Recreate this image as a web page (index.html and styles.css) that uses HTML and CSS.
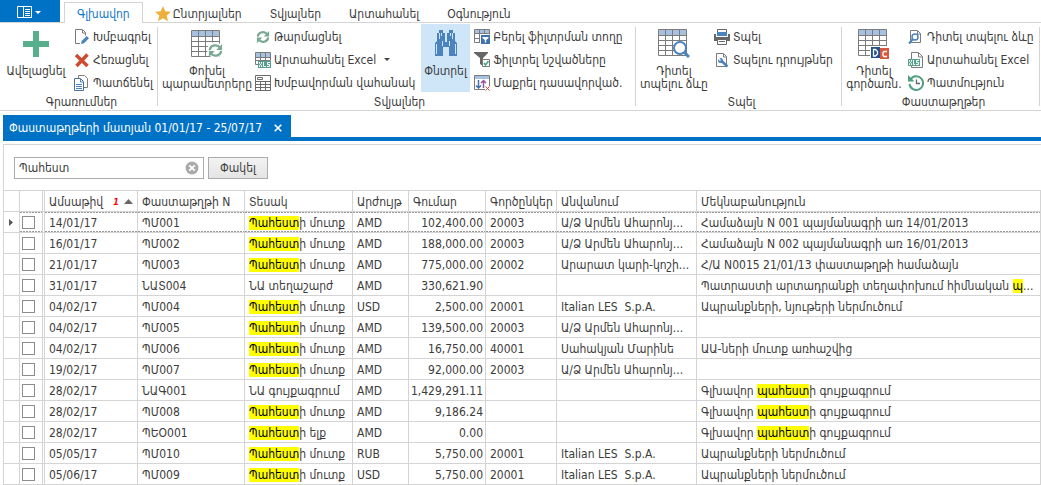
FILE: index.html
```html
<!DOCTYPE html>
<html lang="hy">
<head>
<meta charset="utf-8">
<title>Փաստաթղթերի մատյան</title>
<link rel="stylesheet" href="styles.css">
</head>
<body>
<svg class="sprite" aria-hidden="true">
  <symbol id="grid" viewBox="0 0 32 30">
    <path fill="#fff" d="M1 1h28v26H1z"/><path fill="#a9c1e0" d="M1 1h28v5H1z"/>
    <path fill="none" stroke="#7b7b7b" d="M.5.500h28v26H.5zM.5 6.500h28M.5 11.500h28M.5 16.500h28M.5 21.500h28M7.500 1v25M14.500 1v25M21.500 1v25"/>
  </symbol>
  <symbol id="sync" viewBox="0 0 16 16">
    <path fill="none" stroke="#79a893" stroke-width="2.400" d="M2 7.500C2.500 2 10 .8 12.800 5M14 8.500C13.500 14 6 15.200 3.200 11"/>
    <path fill="#79a893" d="M15 1v6.500H8.800zM1 15V8.500h6.200z"/>
  </symbol>
</svg>

<header class="tabs">
  <button class="app-button" aria-label="Մենյու">
    <svg width="26" height="13" viewBox="0 0 26 13"><path fill="none" stroke="#fff" d="M.5.500h14v11H.5zM6.500 1v10"/><path stroke="#fff" d="M8 3.500h5M8 5.500h5M8 7.500h5M8 9.500h5"/><path fill="#fff" d="M18 5h6l-3 3z"/></svg>
  </button>
  <nav class="tab-list">
    <button class="tab active">Գլխավոր</button>
    <button class="tab starred"><svg width="16" height="16" viewBox="0 0 16 16"><path fill="#eeb03c" d="M8 0l2.300 5.200 5.700.6-4.300 3.700L13 15.300 8 12.300l-5 3 1.300-5.800L0 5.800l5.700-.6z"/></svg>Ընտրյալներ</button>
    <button class="tab">Տվյալներ</button>
    <button class="tab">Արտահանել</button>
    <button class="tab">Օգնություն</button>
  </nav>
</header>

<section class="ribbon">
  <div class="group g-records">
    <div class="tools">
      <button class="big"><svg width="32" height="32" viewBox="0 0 32 32"><path fill="#57b08b" d="M13 3h6v10h10v6H19v10h-6V19H3v-6h10z"/></svg><span>Ավելացնել</span></button>
      <div class="stack">
        <button class="small"><svg width="16" height="16" viewBox="0 0 16 16"><path fill="#fff" stroke="#7b7b7b" d="M1.500 14.500V.500h7l3 3v11z"/><path fill="none" stroke="#7b7b7b" d="M8.500 1v3h3"/><path fill="#fff" d="M6 16V12l7-7 3 3v5l-3 3z"/><path fill="#4a83bd" d="M7 15l.7-3 5-5L15 9.300l-5 5z"/></svg>Խմբագրել</button>
        <button class="small"><svg width="16" height="16" viewBox="0 0 16 16"><path stroke="#cf4a31" stroke-width="3.400" d="M2 3l11.500 11M13.500 2.500L2.500 14"/></svg>Հեռացնել</button>
        <button class="small"><svg width="16" height="16" viewBox="0 0 16 16"><path fill="#fff" stroke="#7b7b7b" d="M4.500 12.500V.500h6l3 3v9z"/><path fill="#fff" stroke="#4a6f9c" d="M.5 15.500v-12h6l3 3v9z"/><path fill="none" stroke="#4a83bd" d="M6.500 4v3h3M2 9.500h6M2 11.500h6M2 13.500h6"/></svg>Պատճենել</button>
      </div>
    </div>
    <h2>Գրառումներ</h2>
  </div>

  <div class="group g-data">
    <div class="tools">
      <button class="big"><svg width="32" height="32" viewBox="0 0 32 32"><use href="#grid" y="2" width="32" height="30"/><circle cx="24" cy="22" r="8" fill="#fff"/><use href="#sync" x="17" y="15" width="15" height="15"/></svg><span>Փոխել<br>պարամետրերը</span></button>
      <div class="stack">
        <button class="small"><svg width="16" height="16"><use href="#sync" width="16" height="14" y="1"/></svg>Թարմացնել</button>
        <button class="small"><svg width="16" height="16" viewBox="0 0 16 16"><path fill="#a9c1e0" d="M1 1h14v4H1z"/><path fill="none" stroke="#7b7b7b" d="M3 12.500H.5V.500h15v8M.5 5.500h15M.5 8.500h15M5.500 0v8M10.500 0v8"/><path fill="#57a08b" d="M3 9h13v7H3z"/><path fill="none" stroke="#fff" d="M4.500 10v1.500l2 2V15M6.500 10v1.500l-2 2V15M8.500 10v4.500H11M15 10.500h-2.500v2h2v2H12"/></svg>Արտահանել Excel<svg class="caret" width="6" height="4" viewBox="0 0 6 4"><path fill="#444" d="M0 0h6L3 3z"/></svg></button>
        <button class="small"><svg width="16" height="16" viewBox="0 0 16 16"><path fill="#fff" stroke="#6b6b6b" d="M.5.500h15v15H.5z"/><path fill="none" stroke="#6b6b6b" d="M2.500 2.500h5v2h-5zM.5 6.500h15M.5 9.500h15M.5 12.500h15M5.500 6v10M10.500 6v10"/></svg>Խմբավորման վահանակ</button>
      </div>
      <button class="big pressed"><svg width="32" height="32" viewBox="0 0 32 32"><path fill="#4a83bd" d="M9 2h4v3h2v8h2V5h2V2h4v3h2v8l2 2v13h-8v-9h-6v9H5V15l2-2V5h2z"/><path fill="none" stroke="#cfe6f9" d="M9.500 5v6M22.500 5v6M6.500 16v10M25.500 16v10M12.500 13v5M19.500 13v5M15 13.500h2M11.500 5v3M20.500 5v3"/></svg><span>Փնտրել</span></button>
      <div class="stack">
        <button class="small"><svg width="16" height="16" viewBox="0 0 16 16"><path fill="#a9c1e0" d="M1 1h14v4H1z"/><path fill="none" stroke="#7b7b7b" d="M6 13.500H.5V.500h15v5M.5 4.500h15M.5 9.500H6M5.500 0v13M10.500 0v5"/><path fill="#3f73b0" d="M7 6h9v9H7z"/><path fill="#fff" d="M8.500 8h6v1L12.200 11v2.500h-1.400V11L8.500 9z"/></svg>Բերել ֆիլտրման տողը</button>
        <button class="small"><svg width="16" height="16" viewBox="0 0 16 16"><path fill="#666" d="M0 0h14v1L9 6v8l-3-2V6L0 1z"/><path fill="#fff" stroke="#777" d="M8.500 7.500h7v7h-7z"/><path fill="none" stroke="#3fa57c" stroke-width="1.500" d="M10 11l1.500 2 3-4"/></svg>Ֆիլտրել նշվածները</button>
        <button class="small"><svg width="16" height="16" viewBox="0 0 16 16"><path fill="#fff" stroke="#7b7b7b" d="M.5.500h15v14H.5z"/><path fill="#a9c1e0" d="M1 1h14v3H1z"/><path fill="none" stroke="#3f73b0" stroke-width="1.500" d="M4.500 5v8M2 10.500l2.500 2.500L7 10.500"/><path fill="none" stroke="#9653a3" stroke-width="1.500" d="M9.500 13V6M7 8l2.500-2.500L12 8"/><path fill="#fff" d="M11 11h5v5h-5z"/><path stroke="#cf4a31" d="M11.500 11.500l4 4M15.500 11.500l-4 4"/></svg>Մաքրել դասավորված.</button>
      </div>
    </div>
    <h2>Տվյալներ</h2>
  </div>

  <div class="group g-print">
    <div class="tools">
      <button class="big"><svg width="32" height="32" viewBox="0 0 32 32"><use href="#grid" y="1" width="32" height="30"/><circle cx="22" cy="20" r="6" fill="#fff" stroke="#4a83bd" stroke-width="2"/><path stroke="#4a83bd" stroke-width="3" d="M26 24l5 5"/></svg><span>Դիտել<br>տպելու ձևը</span></button>
      <div class="stack">
        <button class="small"><svg width="16" height="16" viewBox="0 0 16 16"><path fill="#fff" stroke="#666" d="M3.500.500h9v4h-9z"/><path fill="#4a83bd" d="M3 3h10v4H3z"/><path fill="#666" d="M0 5h2v3h12V5h2v7H0z"/><path fill="#fff" stroke="#666" d="M3.500 10.500h9v5h-9z"/><path stroke="#666" d="M5 12.500h6"/></svg>Տպել</button>
        <button class="small"><svg width="16" height="16" viewBox="0 0 16 16"><path fill="#fff" stroke="#7b7b7b" d="M2.500 14.500V1.500h7l3 3v10z"/><path fill="none" stroke="#7b7b7b" d="M9.500 2v3h3"/><path stroke="#4a83bd" stroke-width="2.500" d="M6.500 8l7 6.500"/><circle cx="6.500" cy="8.500" r="2.500" fill="#4a83bd"/><path stroke="#fff" stroke-width="1.500" d="M4 6l2.500 2.500"/></svg>Տպելու դրույթներ</button>
      </div>
    </div>
    <h2>Տպել</h2>
  </div>

  <div class="group g-docs">
    <div class="tools">
      <button class="big"><svg width="32" height="32" viewBox="0 0 32 32"><use href="#grid" y="1" width="32" height="30"/><path fill="#fff" d="M12 18h20v14H12z"/><path fill="#25508f" d="M13 19h9v11h-9z"/><path fill="#d9593d" d="M22 20h9v11h-9z"/><path fill="none" stroke="#fff" stroke-width="1.300" d="M15.500 21.500h2l2 2v2.500l-2 2h-2zM29 23.500h-3l-1 1v3l1 1h3"/></svg><span>Դիտել<br>գործառն.</span></button>
      <div class="stack">
        <button class="small"><svg width="16" height="16" viewBox="0 0 16 16"><path fill="#fff" stroke="#7b7b7b" d="M2.500 13.500V1.500h7l3 3v9z"/><path fill="none" stroke="#7b7b7b" d="M9.500 2v3h3"/><circle cx="7" cy="8" r="3" fill="#fff" stroke="#4a83bd" stroke-width="1.500"/><path stroke="#4a83bd" stroke-width="2" d="M5 10l-4 4.500"/></svg>Դիտել տպելու ձևը</button>
        <button class="small"><svg width="16" height="16" viewBox="0 0 16 16"><path fill="#fff" stroke="#7b7b7b" d="M3.500 15.500V.500h7l4 4v11z"/><path fill="none" stroke="#7b7b7b" d="M10.500 1v4h4"/><path fill="#57a08b" d="M0 7h12v7H0z"/><path fill="none" stroke="#fff" d="M1.500 8v1.500l2 2V13M3.500 8v1.500l-2 2V13M5.500 8v4.500H7M11 8.500H8.500v2h2v2H8"/></svg>Արտահանել Excel</button>
        <button class="small"><svg width="16" height="16" viewBox="0 0 16 16"><path fill="none" stroke="#4f9f80" stroke-width="2" d="M2.500 4.500A6.800 6.800 0 1 1 1.500 9"/><path fill="#4f9f80" d="M0 0v6.500h6.500z"/><path fill="none" stroke="#666" stroke-width="1.300" d="M8.500 4.500v4H12"/></svg>Պատմություն</button>
      </div>
    </div>
    <h2>Փաստաթղթեր</h2>
  </div>
</section>

<main class="workspace">
  <div class="doc-tabs">
    <div class="doc-tab">Փաստաթղթերի մատյան 01/01/17 - 25/07/17
      <button class="close" aria-label="Փակել ներդիրը"><svg width="8" height="8" viewBox="0 0 8 8"><path stroke="#fff" stroke-width="1.600" d="M.7.700l6.600 6.600M7.300.700L.7 7.300"/></svg></button>
    </div>
  </div>
  <div class="document">
    <form class="search">
      <div class="search-box">
        <input type="text" aria-label="Փնտրել" value="Պահեստ">
        <button type="button" class="clear" aria-label="Մաքրել"><svg width="14" height="14" viewBox="0 0 14 14"><circle cx="7" cy="7" r="6.500" fill="#ababab"/><path stroke="#fff" stroke-width="1.800" d="M4.300 4.300l5.400 5.400M9.700 4.300L4.300 9.700"/></svg></button>
      </div>
      <button type="button" class="dismiss">Փակել</button>
    </form>
    <table class="journal">
      <colgroup><col class="c-mark"><col class="c-check"><col class="c-date"><col class="c-number"><col class="c-type"><col class="c-currency"><col class="c-amount"><col class="c-partner"><col class="c-name"><col></colgroup>
      <thead><tr><th></th><th></th><th><div class="sorted"><span>Ամսաթիվ</span><em>1</em><svg width="9" height="5" viewBox="0 0 9 5"><path fill="#666" d="M4.500 0L9 5H0z"/></svg></div></th><th>Փաստաթղթի N</th><th>Տեսակ</th><th>Արժույթ</th><th>Գումար</th><th>Գործընկեր</th><th>Անվանում</th><th>Մեկնաբանություն</th></tr></thead>
      <tbody>
        <tr class="focused"><td><svg width="4" height="7" viewBox="0 0 4 7"><path fill="#555" d="M0 0l4 3.500L0 7z"/></svg></td><td><input type="checkbox" aria-label="ՊՄ001"></td><td>14/01/17</td><td>ՊՄ001</td><td><mark>Պահեստ</mark>ի մուտք</td><td>AMD</td><td>102,400.00</td><td>20003</td><td>Ա/Ձ Արմեն Ահարոնյ...</td><td>Համաձայն N 001 պայմանագրի առ 14/01/2013</td></tr>
        <tr><td></td><td><input type="checkbox" aria-label="ՊՄ002"></td><td>16/01/17</td><td>ՊՄ002</td><td><mark>Պահեստ</mark>ի մուտք</td><td>AMD</td><td>188,000.00</td><td>20003</td><td>Ա/Ձ Արմեն Ահարոնյ...</td><td>Համաձայն N 002 պայմանագրի առ 16/01/2013</td></tr>
        <tr><td></td><td><input type="checkbox" aria-label="ՊՄ003"></td><td>21/01/17</td><td>ՊՄ003</td><td><mark>Պահեստ</mark>ի մուտք</td><td>AMD</td><td>775,000.00</td><td>20002</td><td>Արարատ կարի-կոշի...</td><td>Հ/Ա N0015 21/01/13 փաստաթղթի համաձայն</td></tr>
        <tr><td></td><td><input type="checkbox" aria-label="ՆԱՏ004"></td><td>31/01/17</td><td>ՆԱՏ004</td><td>ՆԱ տեղաշարժ</td><td>AMD</td><td>330,621.90</td><td></td><td></td><td>Պատրաստի արտադրանքի տեղափոխում հիմնական <mark>պ</mark>...</td></tr>
        <tr><td></td><td><input type="checkbox" aria-label="ՊՄ004"></td><td>04/02/17</td><td>ՊՄ004</td><td><mark>Պահեստ</mark>ի մուտք</td><td>USD</td><td>2,500.00</td><td>20001</td><td>Italian LES&nbsp; S.p.A.</td><td>Ապրանքների, նյութերի ներմուծում</td></tr>
        <tr><td></td><td><input type="checkbox" aria-label="ՊՄ005"></td><td>04/02/17</td><td>ՊՄ005</td><td><mark>Պահեստ</mark>ի մուտք</td><td>AMD</td><td>139,500.00</td><td>20003</td><td>Ա/Ձ Արմեն Ահարոնյ...</td><td></td></tr>
        <tr><td></td><td><input type="checkbox" aria-label="ՊՄ006"></td><td>04/02/17</td><td>ՊՄ006</td><td><mark>Պահեստ</mark>ի մուտք</td><td>AMD</td><td>16,750.00</td><td>40001</td><td>Սահակյան Մարինե</td><td>ԱԱ-ների մուտք առհաշվից</td></tr>
        <tr><td></td><td><input type="checkbox" aria-label="ՊՄ007"></td><td>19/02/17</td><td>ՊՄ007</td><td><mark>Պահեստ</mark>ի մուտք</td><td>AMD</td><td>92,000.00</td><td>20003</td><td>Ա/Ձ Արմեն Ահարոնյ...</td><td></td></tr>
        <tr><td></td><td><input type="checkbox" aria-label="ՆԱԳ001"></td><td>28/02/17</td><td>ՆԱԳ001</td><td>ՆԱ գույքագրում</td><td>AMD</td><td>1,429,291.11</td><td></td><td></td><td>Գլխավոր <mark>պահեստ</mark>ի գույքագրում</td></tr>
        <tr><td></td><td><input type="checkbox" aria-label="ՊՄ008"></td><td>28/02/17</td><td>ՊՄ008</td><td><mark>Պահեստ</mark>ի մուտք</td><td>AMD</td><td>9,186.24</td><td></td><td></td><td>Գլխավոր <mark>պահեստ</mark>ի գույքագրում</td></tr>
        <tr><td></td><td><input type="checkbox" aria-label="ՊԵՕ001"></td><td>28/02/17</td><td>ՊԵՕ001</td><td><mark>Պահեստ</mark>ի ելք</td><td>AMD</td><td>0.00</td><td></td><td></td><td>Գլխավոր <mark>պահեստ</mark>ի գույքագրում</td></tr>
        <tr><td></td><td><input type="checkbox" aria-label="ՊՄ010"></td><td>05/05/17</td><td>ՊՄ010</td><td><mark>Պահեստ</mark>ի մուտք</td><td>RUB</td><td>5,750.00</td><td>20001</td><td>Italian LES&nbsp; S.p.A.</td><td>Ապրանքների ներմուծում</td></tr>
        <tr><td></td><td><input type="checkbox" aria-label="ՊՄ009"></td><td>05/06/17</td><td>ՊՄ009</td><td><mark>Պահեստ</mark>ի մուտք</td><td>USD</td><td>5,750.00</td><td>20001</td><td>Italian LES&nbsp; S.p.A.</td><td>Ապրանքների ներմուծում</td></tr>
      </tbody>
    </table>
  </div>
</main>
</body>
</html>
```
FILE: styles.css
```css
:root {
  --blue: #0072c6;
  --line: #d4d4d4;
  --text: #3c3c3c;
}

* { box-sizing: border-box; }

body {
  margin: 0;
  background: #fff;
  color: var(--text);
  font: 12px/14px "DejaVu Sans Condensed", "DejaVu Sans", sans-serif;
}

button, input { margin: 0; font: inherit; color: inherit; }
button { padding: 0; border: 0; background: none; white-space: nowrap; }
svg { display: block; flex: none; }
.sprite { position: absolute; width: 0; height: 0; }

/* Ribbon tabs */
.tabs { display: flex; height: 23px; border-bottom: 1px solid var(--line); }
.app-button { display: flex; align-items: center; justify-content: center; width: 60px; height: 22px; padding-top: 3px; background: var(--blue); }
.tab-list { display: flex; height: 23px; padding: 2px 0 0 4px; }
.tab { display: flex; align-items: center; justify-content: center; padding: 2px 14px 0; }
.tab.active { border: 1px solid var(--line); border-bottom: 0; background: #fff; color: #1177c9; padding: 1px 12px 0; }
.tab.starred { padding-left: 12px; }
.tab.starred svg { margin-right: 2px; }

/* Ribbon */
.ribbon { display: flex; height: 88px; border-bottom: 1px solid var(--line); }
.group { position: relative; display: flex; flex-direction: column; flex: none; padding: 1px 0 0 5px; }
.group::after { content: ""; position: absolute; right: 0; top: 4px; bottom: 4px; border-right: 1px solid var(--line); }
.group h2 { margin: 0; font: inherit; line-height: 16px; text-align: center; }
.g-records { width: 158px; }
.g-data { width: 478px; }
.g-print { width: 206px; }
.g-docs { width: 198px; }
.tools { display: flex; height: 71px; gap: 4px; }
.big { display: flex; flex-direction: column; align-items: center; height: 68px; padding-top: 4px; line-height: 13px; }
.big span { padding-top: 5px; }
.g-records .big { width: 62px; }
.g-data .big { width: 88px; }
.g-data .big.pressed { width: 50px; background: #cfe6f9; }
.g-print .big { width: 66px; }
.g-docs .big { width: 54px; }
.stack { display: flex; flex-direction: column; align-items: flex-start; padding: 1px 0 0 3px; }
.g-data .stack { width: 163px; padding-left: 0; }
.small { display: flex; align-items: center; gap: 3px; height: 23px; }
.caret { margin-left: 5px; }

/* Document area */
.workspace { padding: 4px 0 0 3px; }
.doc-tabs { display: flex; border-bottom: 4px solid var(--blue); }
.doc-tab { display: flex; align-items: center; gap: 12px; height: 22px; padding: 4px 9px 0 6px; background: var(--blue); color: #fff; }
.close { padding: 2px 0; }
.document { margin-top: 3px; border-left: 1px solid var(--line); border-top: 1px solid var(--line); }
.search { display: flex; gap: 4px; padding: 12px 10px 11px; }
.search-box { display: flex; align-items: center; width: 190px; height: 22px; padding-right: 4px; border: 1px solid #ababab; }
.search-box input { flex: 1; min-width: 0; height: 20px; padding: 0 4px; border: 0; outline: 0; background: transparent; }
.dismiss { width: 60px; height: 22px; border: 1px solid #ababab; background: linear-gradient(#f3f3f3, #e4e4e4); }

/* Journal table */
.journal { width: 100%; table-layout: fixed; border-collapse: separate; border-spacing: 0; border-top: 1px solid var(--line); }
.c-mark { width: 16px; }
.c-check { width: 25px; }
.c-date { width: 93px; }
.c-number { width: 107px; }
.c-type { width: 108px; }
.c-currency { width: 56px; }
.c-amount { width: 77px; }
.c-partner { width: 71px; }
.c-name { width: 140px; }
.journal th, .journal td { height: 21px; padding: 1px 4px 0; border-right: 1px solid var(--line); border-bottom: 1px solid var(--line); font-weight: normal; text-align: left; white-space: nowrap; overflow: hidden; vertical-align: middle; }
.journal th { padding-right: 0; }
.journal td { padding-right: 2px; }
.journal td:first-child { padding: 0 5px; }
.journal th:nth-child(2), .journal td:nth-child(2) { padding: 0 2px; border-right: 3px double var(--line); }
.journal td:nth-child(7) { padding-left: 0; text-align: right; }
.sorted { display: flex; align-items: center; padding-right: 4px; }
.sorted span { flex: 1; }
.sorted em { margin-right: 5px; color: #f00; font-size: 9px; font-weight: bold; line-height: 12px; }
.journal input { display: block; appearance: none; width: 13px; height: 13px; border: 1px solid #8c8c8c; background: #fff; }
.focused td:not(:first-child) {
  background:
    repeating-linear-gradient(90deg, #999 0 2px, transparent 2px 3px) top / 100% 1px no-repeat border-box,
    repeating-linear-gradient(90deg, #999 0 2px, transparent 2px 3px) bottom 1px left / 100% 1px no-repeat border-box;
}
mark { background: #ff0; color: #000; }
```
